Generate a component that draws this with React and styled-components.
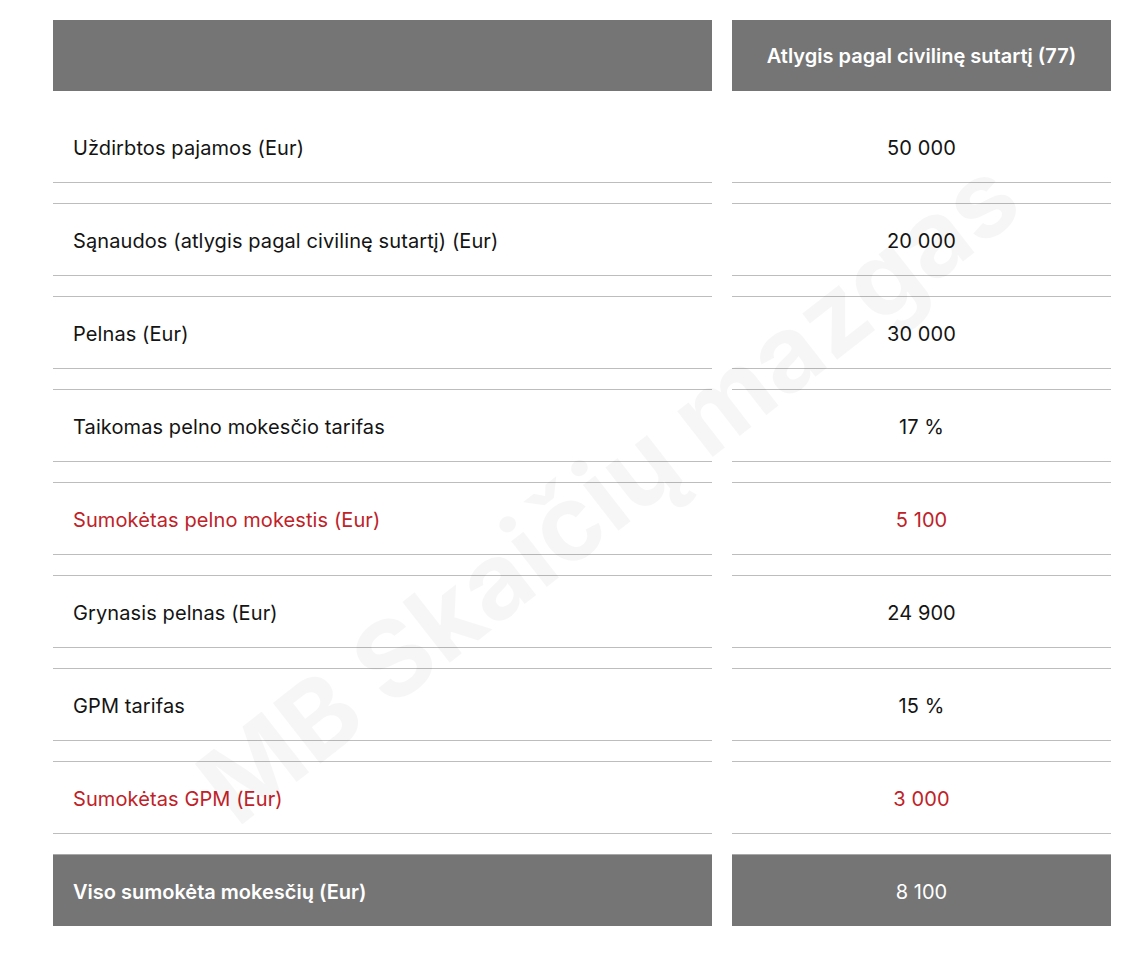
import React from "react";
import styled, { createGlobalStyle } from "styled-components";

const rows = [
  { label: "Uždirbtos pajamos (Eur)", value: "50 000" },
  { label: "Sąnaudos (atlygis pagal civilinę sutartį) (Eur)", value: "20 000" },
  { label: "Pelnas (Eur)", value: "30 000" },
  { label: "Taikomas pelno mokesčio tarifas", value: "17 %" },
  { label: "Sumokėtas pelno mokestis (Eur)", value: "5 100", paid: true },
  { label: "Grynasis pelnas (Eur)", value: "24 900" },
  { label: "GPM tarifas", value: "15 %" },
  { label: "Sumokėtas GPM (Eur)", value: "3 000", paid: true },
];

const App = () => {
  return (
    <>
      <GlobalStyle />
      <Page>
        <TaxGrid>
          <HeadCell />
          <HeadCell $center>Atlygis pagal civilinę sutartį (77)</HeadCell>
          {rows.map((row, i) => (
            <React.Fragment key={row.label}>
              <BodyCell $first={i === 0} $paid={row.paid}>
                {row.label}
              </BodyCell>
              <BodyCell $first={i === 0} $paid={row.paid} $center>
                {row.value}
              </BodyCell>
            </React.Fragment>
          ))}
          <TotalCell $bold>Viso sumokėta mokesčių (Eur)</TotalCell>
          <TotalCell $center>8 100</TotalCell>
        </TaxGrid>
        <Watermark>MB Skaičių mazgas</Watermark>
      </Page>
    </>
  );
};

const GlobalStyle = createGlobalStyle`
  *, *::before, *::after {
    box-sizing: border-box;
  }
  body {
    margin: 0;
    background: #ffffff;
    font-family: Inter, "Liberation Sans", sans-serif;
  }
`;

const Page = styled.div`
  position: relative;
  width: 1148px;
  height: 964px;
  overflow: hidden;
  padding: 20px 0 0 53px;
`;

const TaxGrid = styled.div`
  display: grid;
  grid-template-columns: 659px 379px;
  column-gap: 20px;
  row-gap: 20px;
`;

const HeadCell = styled.div`
  height: 71px;
  background: #757575;
  color: #ffffff;
  font-size: 20px;
  font-weight: 600;
  display: flex;
  align-items: center;
  justify-content: ${(p) => (p.$center ? "center" : "flex-start")};
  padding: 0 20px;
`;

const BodyCell = styled.div`
  height: ${(p) => (p.$first ? "72px" : "73px")};
  border-top: ${(p) => (p.$first ? "none" : "1px solid #bdbdbd")};
  border-bottom: 1px solid #bdbdbd;
  color: ${(p) => (p.$paid ? "#bf2228" : "#141414")};
  font-size: 20px;
  letter-spacing: 0.1px;
  display: flex;
  align-items: center;
  justify-content: ${(p) => (p.$center ? "center" : "flex-start")};
  padding: 2px 20px 0;
`;

const TotalCell = styled.div`
  height: 72px;
  border-top: 1px solid #a8a8a8;
  background: #757575;
  color: #ffffff;
  font-size: 20px;
  font-weight: ${(p) => (p.$bold ? 600 : 400)};
  display: flex;
  align-items: center;
  justify-content: ${(p) => (p.$center ? "center" : "flex-start")};
  padding: 2px 20px 0;
`;

const Watermark = styled.div`
  position: absolute;
  left: 608px;
  top: 490px;
  transform: translate(-50%, -50%) rotate(-38deg);
  font-family: Inter, "Liberation Sans", sans-serif;
  font-size: 106px;
  font-weight: 700;
  color: rgba(0, 0, 0, 0.035);
  white-space: nowrap;
  pointer-events: none;
`;

export default App;
